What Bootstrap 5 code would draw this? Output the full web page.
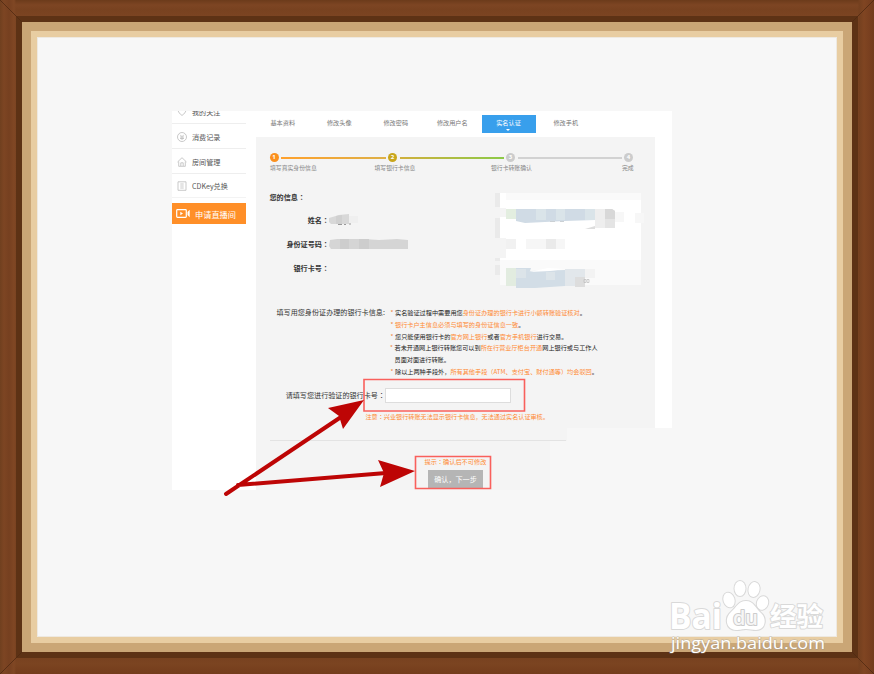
<!DOCTYPE html>
<html lang="zh-CN">
<head>
<meta charset="utf-8">
<meta name="viewport" content="width=device-width, initial-scale=1">
<title>实名认证</title>
<link rel="stylesheet" href="https://cdn.jsdelivr.net/npm/bootstrap@5.3.0/dist/css/bootstrap.min.css">
<style>
body{width:874px;height:674px;overflow:hidden;background:#784220;font-family:"Noto Sans CJK SC",sans-serif;font-size:7.1px;line-height:12px;color:#333}
.frame-wood{width:874px;height:674px;padding:16px;background:
 linear-gradient(90deg,#70401f 0,#7d4523 4px,#764020 9px,#804724 14px,transparent 16px,transparent 858px,#74401f 859px,#804522 864px,#783f1f 870px,#713d1d 874px),
 linear-gradient(#6c3b1b 0,#7d4523 5px,#784220 10px,#7b4422 16px,#784220 658px,#7b4421 664px,#743c1c 674px)}
.frame-dark{border:6px solid #5d3215;height:642px}
.frame-tan{border:9px solid #caa676;height:630px}
.frame-light{border:6px solid #e8cda2;height:612px}
.mat{height:600px;background:#f7f7f7;box-shadow:inset 0 0 0 1px #eee9e1;padding:74px 0 0 135px}
.panel{width:500px;height:379px;background:#fff;clip-path:polygon(0 0,500px 0,500px 317px,395px 317px,395px 330px,378px 330px,378px 379px,0 379px)}
.side{width:84px;overflow:hidden}
.side-item{width:74px;height:24.6px;border-bottom:1px solid #eee;padding-left:5px;padding-top:1.500px;color:#555}
.side-item:first-child{height:13.4px;padding-top:0;padding-bottom:6px}
.side-item svg{width:10px;height:10px;margin-right:5px;fill:none;stroke:#bbb;stroke-width:.8}
.side-item.last{border-color:#f3f3f3}
.side-on{width:74px;height:21px;margin-top:5px;padding-left:4px;background:#ff8f28;color:#fff;font-size:8.2px}
.side-on svg{width:14px;height:11px;margin-right:5px}
.tabs{height:26px;padding-left:1px;font-size:6.15px;color:#777}
.tab-cell{width:56.5px;height:18px;line-height:16.5px;margin-top:4px;text-align:center}
.tab-cell.on{width:54px;background:#389fec;color:#fff;position:relative;margin-left:1px;margin-right:2px}
.tab-cell.on::after{content:"";position:absolute;left:24px;bottom:2px;border:2.5px solid transparent;border-top-color:#fff;border-bottom:0}
.main-area{width:399px;height:353px;background:#f4f4f4;padding-top:16px}
.steps{padding-left:13.5px;height:9px}
.dot{width:9px;height:9px;border-radius:50%;color:#fff;font:bold 6px/9px "Open Sans",sans-serif;text-align:center;flex:none}
.d1{background:#fb901d}.d2{background:#c9a61c}.d3{background:#ccc}
.bar{height:2px;margin:0 2.5px}
.b1{width:104.5px;background:linear-gradient(90deg,#ffa12d,#deb047)}
.b2{width:104px;background:linear-gradient(90deg,#d0b03c,#8cca48)}
.b3{width:104px;background:#d2d2d2}
.step-names{font-size:5.85px;line-height:10px;height:10px;margin-top:1px;color:#888;padding-left:14px;white-space:nowrap}
.n1{width:104.5px}.n2{width:116.500px}.n3{width:131px}
.info{height:100px;margin-top:17px}
.info-left{width:230px;font-weight:700;color:#333;padding-top:1px}
.info-title{padding-left:13.5px;margin-bottom:4.5px}
.info-row{height:24px}
.info-key{width:73px;text-align:right}
.rules{margin-top:17px;height:71.500px}
.rules-key{padding-left:20.5px;width:134px;height:12px;white-space:nowrap;line-height:11px}
.rules-list{font-size:6.17px;line-height:11.8px;white-space:nowrap;color:#222}
.rules-list li{padding-left:5px;text-indent:-4.5px}
.rules-list li::before{content:"*";display:inline-block;width:4.5px;text-indent:0;color:#f0843c}
.rules-list li.wrapped{padding-left:4.5px}
.org{color:#ff8a33}
.card-row{height:14px;margin-top:9.500px}
.card-key{width:129px;text-align:right}
.card-input{width:126px;height:15px;min-height:0;padding:0;border:1px solid #ddd;border-radius:0;background:#fff}
.note{font-size:6.12px;padding-left:109.5px;margin-top:9px;white-space:nowrap}
.rule-line{border-top:1px solid #e3e3e3;margin:17px 0 0 14px;width:296px}
.tip{font-size:6.2px;margin:15px 0 0 168.5px;height:12px}
.btn-next{display:block;width:55px;height:18px;margin:2px 0 0 172px;padding:0;border:0;border-radius:0;background:#b5b5b5;color:#fff;font-size:7.1px;line-height:18px}
.overlay{left:0;top:0;pointer-events:none}
</style>
<script src="https://cdn.jsdelivr.net/npm/bootstrap@5.3.0/dist/js/bootstrap.bundle.min.js"></script>
</head>
<body>
<div class="frame-wood"><div class="frame-dark"><div class="frame-tan"><div class="frame-light"><div class="mat">
 <div class="panel d-flex">
  <aside class="side flex-shrink-0">
   <div class="side-item d-flex align-items-end"><svg viewBox="0 0 10 10"><path d="M1 3.5Q1 1 3.3 1 5 1 5 2.5 5 1 6.7 1 9 1 9 3.5 9 5.500 5 8.500 1 5.500 1 3.500Z"/></svg><span style="margin-bottom:-1px">我的关注</span></div>
   <div class="side-item d-flex align-items-center"><svg viewBox="0 0 10 10"><circle cx="5" cy="5" r="4.500"/><path d="M3.200 2.800 5 4.700 6.800 2.800M3 5H7M3 6.500H7M5 5V8"/></svg>消费记录</div>
   <div class="side-item d-flex align-items-center"><svg viewBox="0 0 10 10"><path d="M.5 5 5 .7 9.500 5M1.700 4.500V9.300H8.300V4.500M3.800 9V5.800H6.200V9"/></svg>房间管理</div>
   <div class="side-item last d-flex align-items-center"><svg viewBox="0 0 10 10"><path d="M1 .8H9V9.300H1ZM3.300 3H6.700M3.300 5H6.700M3.300 7H6.700"/></svg>CDKey兑换</div>
   <div class="side-on d-flex align-items-center"><svg viewBox="0 0 14 11"><rect x=".7" y="1.700" width="9.600" height="7.600" rx=".8" fill="none" stroke="#fff" stroke-width="1.200"/><path d="M4.300 3.700 7 5.500 4.300 7.300ZM11.500 4 13.700 1.800V9.200L11.500 7Z" fill="#fff"/></svg>申请直播间</div>
  </aside>
  <section>
   <nav class="tabs d-flex">
    <div class="tab-cell" style="margin-left:-2.500px">基本资料</div><div class="tab-cell">修改头像</div><div class="tab-cell">修改密码</div><div class="tab-cell">修改用户名</div><div class="tab-cell on">实名认证</div><div class="tab-cell">修改手机</div>
   </nav>
   <div class="main-area">
    <div class="steps d-flex align-items-center"><span class="dot d1">1</span><span class="bar b1"></span><span class="dot d2">2</span><span class="bar b2"></span><span class="dot d3">3</span><span class="bar b3"></span><span class="dot d3">4</span></div>
    <div class="step-names d-flex"><span class="n1">填写真实身份信息</span><span class="n2">填写银行卡信息</span><span class="n3">银行卡转账确认</span><span>完成</span></div>
    <div class="info d-flex">
     <div class="info-left">
      <div class="info-title">您的信息<span lang="zh-TW">：</span></div>
      <div class="info-row d-flex align-items-center"><span class="info-key">姓名<span lang="zh-TW">：</span></span><svg width="32" height="14" viewBox="0 0 32 14"><path d="M0 5 10 2 20 1V11H2L0 9Z" fill="#d8d8d8"/><path d="M7 3 13 2V11H7Z" fill="#d0d0d0"/><path d="M20 3H29V10H20Z" fill="#efefef"/><path d="M9 11.500h4M15 11.500h2M20 11h2" stroke="#999"/></svg></div>
      <div class="info-row d-flex align-items-center"><span class="info-key">身份证号码<span lang="zh-TW">：</span></span><svg width="82" height="12" viewBox="0 0 82 12"><path d="M1 2 8 1 35 1 50 2 68 1 79 2V11H2L0 8Z" fill="#d5d5d5"/><path d="M11 1H20V11H11ZM30 1H40V11H30Z" fill="#cdcdcd"/></svg></div>
      <div class="info-row d-flex align-items-center"><span class="info-key">银行卡号<span lang="zh-TW">：</span></span></div>
     </div>
     <svg width="169" height="100" viewBox="486 190 169 100">
      <path d="M500 193H641V285H500Z" fill="#fff"/><path d="M506 193H641V200H506ZM500 260H641V285H500Z" fill="#fafafa"/>
      <path d="M495 193h5v14h-5ZM495 218h5v43h-5ZM495 265h5v10h-5Z" fill="#eaeaea"/><path d="M487 208h19v9h-19ZM487 238h19v20h-19Z" fill="#f4f4f4"/>
      <path d="M506 209h10v10h-10Z" fill="#e3eee0"/><path d="M516 209h79v11l-30 1-40 2-9-2Z" fill="#d0dbe5"/><path d="M536 209h10v11h-10ZM556 209h9v11h-9ZM585 209h10v11h-10Z" fill="#dae4e9"/>
      <path d="M595 209h10v19h-10Z" fill="#eee"/><path d="M605 209h7l3 2v17h-10Z" fill="#e4e4e4"/><path d="M605 209h7l3 2v8h-10Z" fill="#d8d8d8"/><path d="M615 212h9v10h-9ZM635 213h9v10h-9Z" fill="#f7f7f7"/>
      <path d="M550 221.500h5M560 221.500h4" stroke="#cbd0d4"/><path d="M585 229l10-3v3Z" fill="#ddd"/>
      <path d="M506 239h10v10h-10ZM546 239h9v10h-9Z" fill="#f1f1f1"/><path d="M526 239h20v10h-20ZM555 239h10v10h-10Z" fill="#f6f6f6"/><path d="M546 239h10v10h-10Z" fill="#eaeaea"/>
      <path d="M506 268h10v18h-10Z" fill="#e2ece0"/><path d="M516 268h15l-1 3 35-1v16l-30 2h-19Z" fill="#d2dde6"/><path d="M529 272 548 268 565 269 550 271Z" fill="#fff"/><path d="M516 269h10v9h-10ZM546 272h9v8h-9Z" fill="#dce4e9"/><path d="M565 269h20v17h-20Z" fill="#e2e7eb"/><path d="M575 277h10v10h-10Z" fill="#ddd"/><path d="M585 269h10v9h-10Z" fill="#f3f3f3"/><path d="M584 279.500h2v3h-2ZM587 279.500h2v3h-2Z" fill="none" stroke="#bbb" stroke-width=".7"/>
     </svg>
    </div>
    <div class="rules d-flex">
     <div class="rules-key">填写用您身份证办理的银行卡信息:</div>
     <ul class="rules-list list-unstyled mb-0">
      <li>实名验证过程中需要用您<span class="org">身份证办理的银行卡进行小额转账验证核对</span>。</li>
      <li><span class="org">银行卡户主信息必须与填写的身份证信息一致</span>。</li>
      <li>您只能使用银行卡的<span class="org">官方网上银行</span>或者<span class="org">官方手机银行</span>进行交易。</li>
      <li class="wrapped">若未开通网上银行转账您可以到<span class="org">所在行营业厅柜台开通</span>网上银行或与工作人<br>员面对面进行转账。</li>
      <li>除以上两种手段外，<span class="org">所有其他手段（ATM、支付宝、财付通等）均会驳回</span>。</li>
     </ul>
    </div>
    <div class="card-row d-flex align-items-center"><span class="card-key">请填写您进行验证的银行卡号<span lang="zh-TW">：</span></span><input class="form-control card-input" type="text" aria-label="银行卡号"></div>
    <div class="note org">注意<span lang="zh-TW">：</span>兴业银行转账无法显示银行卡信息，无法通过实名认证审核。</div>
    <div class="rule-line"></div>
    <div class="tip org">提示<span lang="zh-TW">：</span>确认后不可修改</div>
    <button class="btn btn-next">确认，下一步</button>
   </div>
  </section>
 </div>
</div></div></div></div></div>
<svg class="overlay position-absolute" width="874" height="674" viewBox="0 0 874 674">
 <path d="M0 0 22 22M874 0 852 22M0 674 22 652M874 674 852 652" stroke="#512a11" stroke-width=".8"/>
 <g fill="none" stroke="#f9605c" stroke-width="1.600"><path d="M364 379.500H524.500V411H364Z"/><path d="M415.500 456.500H490.500V488.500H415.500Z"/></g>
 <g fill="#bd0505" stroke="#bd0505"><path d="M226 494 347 413M238 485 386 473" fill="none" stroke-width="4" stroke-linecap="round"/><path d="M364 400 328 408 339 416 343 429ZM415 471 378 460 384 473 380 487Z" stroke="none"/></g>
 <g fill="#fff" stroke="#d9d9d9" stroke-width="2" paint-order="stroke" stroke-linejoin="round">
  <text x="669" y="629" font-family="Open Sans" font-weight="700" font-size="35" textLength="53" lengthAdjust="spacingAndGlyphs">Bai</text>
  <ellipse cx="729" cy="600" rx="5.500" ry="7.500" transform="rotate(-18 729 600)"/><ellipse cx="740" cy="588.500" rx="5.500" ry="7.500"/><ellipse cx="754" cy="589.500" rx="5.500" ry="7.500" transform="rotate(12 754 589.500)"/><ellipse cx="762.500" cy="603" rx="5.500" ry="7" transform="rotate(20 762.500 603)"/>
  <path d="M746 601C738 601 737 607 731 612 724 618 726 630 736 630 741 630 742 629 746 629 750 629 752 630 756 630 766 630 767 618 761 613 755 608 754 601 746 601Z"/>
  <text x="733" y="625" font-family="Open Sans" font-weight="600" font-size="20" textLength="25" lengthAdjust="spacingAndGlyphs" fill="#f6f6f6" stroke="#ccc">du</text>
  <text x="770" y="626" font-family="Noto Sans CJK SC" font-weight="700" font-size="26.500" textLength="53" lengthAdjust="spacingAndGlyphs">经验</text>
  <text x="671" y="649" font-family="Open Sans" font-weight="400" font-size="17" textLength="154" lengthAdjust="spacingAndGlyphs" stroke="#999" stroke-opacity=".4" stroke-width="1.500">jingyan.baidu.com</text>
 </g>
</svg>
</body>
</html>
